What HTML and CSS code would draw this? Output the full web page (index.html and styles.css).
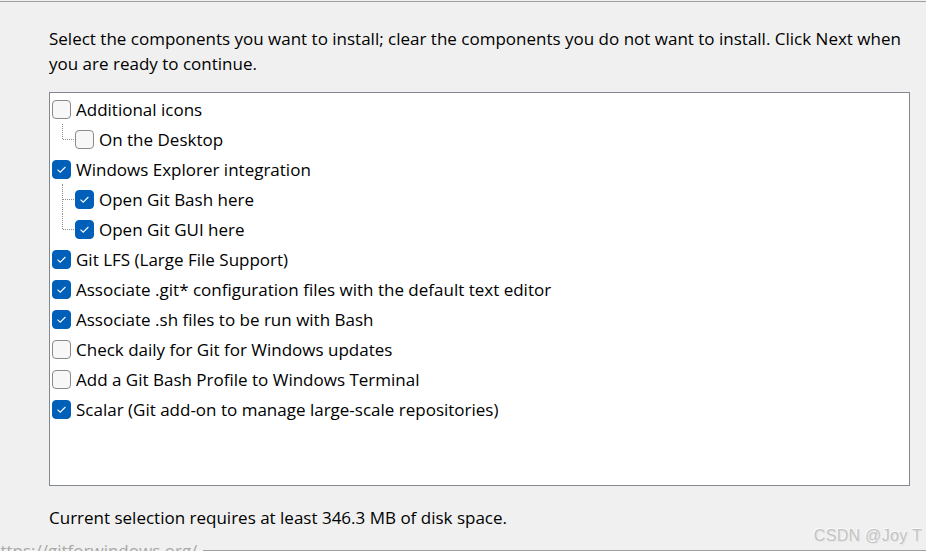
FILE: index.html
```html
<!DOCTYPE html>
<html>
<head>
<meta charset="utf-8">
<title>Select Components</title>
<link rel="stylesheet" href="styles.css">
</head>
<body>
<div class="screen">
  <div class="topline"></div>
  <div class="content">
    <p class="intro">Select the components you want to install; clear the components you do not want to install. Click Next when you are ready to continue.</p>
    <div class="listbox">
      <div class="row"><span class="cb"></span><span class="label">Additional icons</span></div>
      <div class="row child last"><span class="cb"></span><span class="label">On the Desktop</span></div>
      <div class="row"><span class="cb on"><svg viewBox="0 0 19 19"><path d="M5.5 9.6 L8.2 12.2 L13.4 7"/></svg></span><span class="label">Windows Explorer integration</span></div>
      <div class="row child"><span class="cb on"><svg viewBox="0 0 19 19"><path d="M5.5 9.6 L8.2 12.2 L13.4 7"/></svg></span><span class="label">Open Git Bash here</span></div>
      <div class="row child last"><span class="cb on"><svg viewBox="0 0 19 19"><path d="M5.5 9.6 L8.2 12.2 L13.4 7"/></svg></span><span class="label">Open Git GUI here</span></div>
      <div class="row"><span class="cb on"><svg viewBox="0 0 19 19"><path d="M5.5 9.6 L8.2 12.2 L13.4 7"/></svg></span><span class="label">Git LFS (Large File Support)</span></div>
      <div class="row"><span class="cb on"><svg viewBox="0 0 19 19"><path d="M5.5 9.6 L8.2 12.2 L13.4 7"/></svg></span><span class="label">Associate .git* configuration files with the default text editor</span></div>
      <div class="row"><span class="cb on"><svg viewBox="0 0 19 19"><path d="M5.5 9.6 L8.2 12.2 L13.4 7"/></svg></span><span class="label">Associate .sh files to be run with Bash</span></div>
      <div class="row"><span class="cb"></span><span class="label">Check daily for Git for Windows updates</span></div>
      <div class="row"><span class="cb"></span><span class="label">Add a Git Bash Profile to Windows Terminal</span></div>
      <div class="row"><span class="cb on"><svg viewBox="0 0 19 19"><path d="M5.5 9.6 L8.2 12.2 L13.4 7"/></svg></span><span class="label">Scalar (Git add-on to manage large-scale repositories)</span></div>
    </div>
    <p class="space">Current selection requires at least 346.3 MB of disk space.</p>
  </div>
  <div class="footer">
    <span class="url">https://gitforwindows.org/</span>
    <span class="rule"></span>
  </div>
  <div class="watermark">CSDN @Joy T</div>
</div>
</body>
</html>
```
FILE: styles.css
```css
html, body {
  margin: 0;
  padding: 0;
}
body {
  background: #f0f0f0;
  font-family: "Open Sans", "Noto Sans", sans-serif;
  font-size: 17px;
  color: #000;
}
.screen {
  position: relative;
  width: 926px;
  height: 551px;
  overflow: hidden;
  display: flex;
  flex-direction: column;
}
.topline {
  margin-top: 1px;
  height: 1px;
  background: #a0a0a0;
  flex: none;
}
.content {
  padding: 0 10px 0 49px;
  flex: none;
}
.intro {
  margin: 24px 0 0 0;
  line-height: 25px;
}
.listbox {
  margin: 16px 6px 0 0;
  height: 391px;
  background: #fff;
  border: 1px solid #828790;
  padding-top: 1px;
  box-sizing: content-box;
}
.row {
  position: relative;
  height: 30px;
  display: flex;
  align-items: center;
  padding-left: 2px;
  line-height: 30px;
  white-space: nowrap;
}
.label {
  position: relative;
  top: 1px;
}
.row.child {
  padding-left: 25px;
}
.row.child::before {
  content: "";
  position: absolute;
  left: 12px;
  top: 0;
  bottom: 0;
  border-left: 1px dotted #8c8c8c;
}
.row.child.last::before {
  bottom: 50%;
}
.row.child::after {
  content: "";
  position: absolute;
  left: 13px;
  top: 50%;
  width: 11px;
  border-top: 1px dotted #8c8c8c;
}
.cb {
  flex: none;
  width: 19px;
  height: 19px;
  box-sizing: border-box;
  border: 1px solid #8a8a8a;
  border-radius: 4px;
  background: #f7f7f7;
  margin-right: 5px;
  margin-top: 1px;
  display: flex;
}
.cb.on {
  background: #005fb8;
  border-color: #005fb8;
}
.cb svg {
  width: 19px;
  height: 19px;
  margin: -1px;
}
.cb svg path {
  fill: none;
  stroke: #fff;
  stroke-width: 1.1;
}
.space {
  margin: 19px 0 0 0;
  line-height: 25px;
}
.footer {
  margin-top: 10px;
  display: flex;
  align-items: center;
  height: 22px;
  flex: none;
}
.url {
  margin-left: -10px;
  color: #a8a8a8;
  font-family: "Open Sans", sans-serif;
  font-size: 17px;
  line-height: 22px;
  white-space: nowrap;
}
.rule {
  flex: 1;
  margin-left: 6px;
  margin-top: -1px;
  height: 1px;
  background: #a0a0a0;
  box-shadow: 0 1px 0 #fff;
}
.watermark {
  position: absolute;
  right: 4px;
  top: 527px;
  font-family: "Liberation Sans", Arial, sans-serif;
  font-size: 16px;
  color: #c4c4c4;
  text-shadow: 1px 1px 1px #e4e4e4, -1px -1px 0 #fafafa;
  letter-spacing: 0.3px;
}
```
